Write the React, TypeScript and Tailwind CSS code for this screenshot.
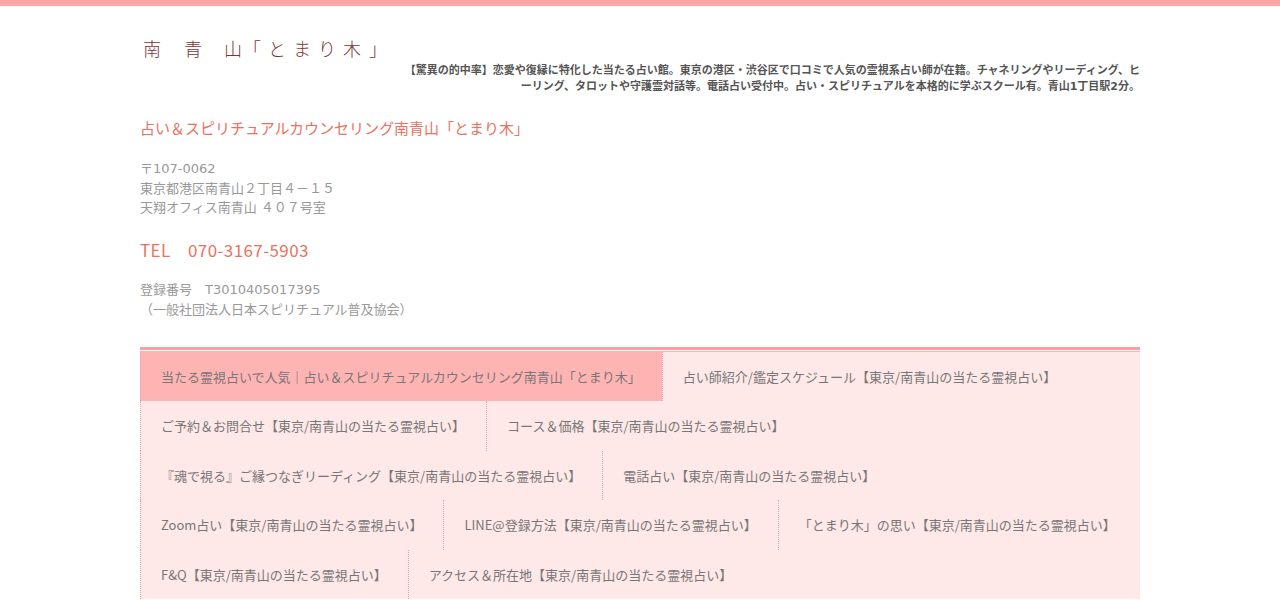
import React from "react";

const navItems = [
  "当たる霊視占いで人気｜占い＆スピリチュアルカウンセリング南青山「とまり木」",
  "占い師紹介/鑑定スケジュール【東京/南青山の当たる霊視占い】",
  "ご予約＆お問合せ【東京/南青山の当たる霊視占い】",
  "コース＆価格【東京/南青山の当たる霊視占い】",
  "『魂で視る』ご縁つなぎリーディング【東京/南青山の当たる霊視占い】",
  "電話占い【東京/南青山の当たる霊視占い】",
  "Zoom占い【東京/南青山の当たる霊視占い】",
  "LINE@登録方法【東京/南青山の当たる霊視占い】",
  "「とまり木」の思い【東京/南青山の当たる霊視占い】",
  "F&Q【東京/南青山の当たる霊視占い】",
  "アクセス＆所在地【東京/南青山の当たる霊視占い】",
];

const logoChars: { c: string; x: number }[] = [
  { c: "南", x: 143 },
  { c: "青", x: 184 },
  { c: "山", x: 224 },
  { c: "「", x: 243 },
  { c: "と", x: 268 },
  { c: "ま", x: 293 },
  { c: "り", x: 318 },
  { c: "木", x: 343 },
  { c: "」", x: 369 },
];

const latinFont = '"DejaVu Sans", "Noto Sans CJK JP", sans-serif';

export default function App() {
  return (
    <div
      className="min-h-[600px] bg-white"
      style={{ fontFamily: '"Noto Sans CJK JP", "Noto Sans", sans-serif' }}
    >
      <div className="h-[6px] bg-[#ffa6a6]" />
      <div className="mx-auto w-[1000px]">
        {/* logo */}
        <div className="mt-[32px] flex h-[20px] text-[18px] leading-[20px] font-light text-[#7e3434]">
          {logoChars.map((l, i) => (
            <span
              key={i}
              className="block w-[18px] shrink-0"
              style={{ marginLeft: i === 0 ? l.x - 140 : l.x - logoChars[i - 1].x - 18 }}
            >
              {l.c}
            </span>
          ))}
        </div>
        {/* description */}
        <div
          className="mt-[5px] text-right text-[11px] leading-[16px] font-bold text-[#555] whitespace-nowrap"
          style={{ fontFamily: latinFont }}
        >
          【驚異の的中率】恋愛や復縁に特化した当たる占い館。東京の港区・渋谷区で口コミで人気の霊視系占い師が在籍。チャネリングやリーディング、ヒ
          <br />
          ーリング、タロットや守護霊対話等。電話占い受付中。占い・スピリチュアルを本格的に学ぶスクール有。青山1丁目駅2分。
        </div>
        {/* title */}
        <div className="mt-[22px] text-[15px] leading-[22px] text-[#e8735e]">
          占い＆スピリチュアルカウンセリング南青山「とまり木」
        </div>
        {/* address */}
        <div
          className="mt-[20px] text-[13px] leading-[19.5px] text-[#999]"
          style={{ fontFamily: latinFont }}
        >
          <div>〒107-0062</div>
          <div>東京都港区南青山２丁目４－１５</div>
          <div>天翔オフィス南青山 ４０７号室</div>
        </div>
        <div className="mt-[20px] text-[17px] leading-[24px] tracking-[0.4px] text-[#e8735e]">
          TEL　070-3167-5903
        </div>
        <div
          className="mt-[18px] text-[13px] leading-[20px] text-[#999]"
          style={{ fontFamily: latinFont }}
        >
          <div>登録番号　T3010405017395</div>
          <div>（一般社団法人日本スピリチュアル普及協会）</div>
        </div>
        {/* nav */}
        <div className="mt-[27px]">
          <div className="h-[3px] bg-[#ff9e9e]" />
          <div className="h-px bg-white" />
          <div className="h-px bg-[#ffb0b0]" />
          <nav className="flex flex-wrap bg-[#ffe8e8]">
            {navItems.map((t, i) => (
              <div
                key={i}
                className={`border-l border-dotted border-[#f5a0a0] py-[15px] pl-[20px] pr-[21px] text-[13px] leading-[19.5px] whitespace-nowrap text-[#777] ${
                  i === 0 ? "bg-[#ffb4b4]" : ""
                }`}
              >
                {t}
              </div>
            ))}
          </nav>
        </div>
      </div>
    </div>
  );
}
